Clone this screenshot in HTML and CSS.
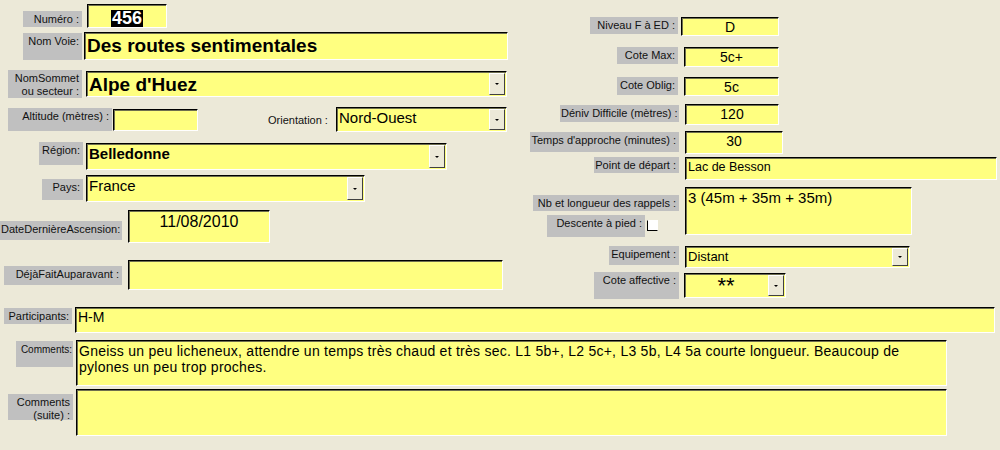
FILE: index.html
```html
<!DOCTYPE html>
<html lang="fr">
<head>
    <meta charset="UTF-8">
    <title>Fiche voie</title>
    <link rel="stylesheet" href="styles.css">
</head>
<body>
    <div class="form">
        <div class="top">
            <div class="col-left">
                <div class="row r-numero">
                    <span class="lbl">Numéro :</span>
                    <div class="fld c"><span class="sel">456</span></div>
                </div>
                <div class="row r-voie">
                    <span class="lbl">Nom Voie:</span>
                    <div class="fld big">Des routes sentimentales</div>
                </div>
                <div class="row r-sommet">
                    <span class="lbl">NomSommet<br>ou secteur :</span>
                    <div class="fld big combo">Alpe d'Huez<span class="drop"></span></div>
                </div>
                <div class="row r-alt">
                    <span class="lbl">Altitude (mètres) :</span>
                    <div class="fld f-alt"></div>
                    <span class="plain">Orientation :</span>
                    <div class="fld combo f-orient">Nord-Ouest<span class="drop"></span></div>
                </div>
                <div class="row r-region">
                    <span class="lbl">Région:</span>
                    <div class="fld combo bold">Belledonne<span class="drop"></span></div>
                </div>
                <div class="row r-pays">
                    <span class="lbl">Pays:</span>
                    <div class="fld combo">France<span class="drop"></span></div>
                </div>
                <div class="row r-date">
                    <span class="lbl">DateDernièreAscension:</span>
                    <div class="fld c">11/08/2010</div>
                </div>
                <div class="row r-deja">
                    <span class="lbl">DéjàFaitAuparavant :</span>
                    <div class="fld"></div>
                </div>
            </div>

            <div class="col-right">
                <div class="row r-niv">
                    <span class="lbl">Niveau F à ED :</span>
                    <div class="fld c">D</div>
                </div>
                <div class="row r-max">
                    <span class="lbl">Cote Max:</span>
                    <div class="fld c">5c+</div>
                </div>
                <div class="row r-obl">
                    <span class="lbl">Cote Oblig:</span>
                    <div class="fld c">5c</div>
                </div>
                <div class="row r-den">
                    <span class="lbl">Déniv Difficile (mètres) :</span>
                    <div class="fld c">120</div>
                </div>
                <div class="row r-tmp">
                    <span class="lbl">Temps d'approche (minutes) :</span>
                    <div class="fld c">30</div>
                </div>
                <div class="row r-pt">
                    <span class="lbl">Point de départ :</span>
                    <div class="fld">Lac de Besson</div>
                </div>
                <div class="row r-rap">
                    <div class="stack">
                        <span class="lbl l-rap">Nb et longueur des rappels :</span>
                        <div class="check-row">
                            <span class="lbl l-desc">Descente à pied :</span>
                            <span class="chk"></span>
                        </div>
                    </div>
                    <div class="fld">3 (45m + 35m + 35m)</div>
                </div>
                <div class="row r-eq">
                    <span class="lbl">Equipement :</span>
                    <div class="fld combo">Distant<span class="drop"></span></div>
                </div>
                <div class="row r-aff">
                    <span class="lbl">Cote affective :</span>
                    <div class="fld combo c stars">**<span class="drop"></span></div>
                </div>
            </div>
        </div>

        <div class="bottom">
            <div class="row r-part">
                <span class="lbl">Participants:</span>
                <div class="fld">H-M</div>
            </div>
            <div class="row r-com">
                <span class="lbl">Comments:</span>
                <div class="fld memo">Gneiss un peu licheneux, attendre un temps très chaud et très sec. L1 5b+, L2 5c+, L3 5b, L4 5a courte longueur. Beaucoup de pylones un peu trop proches.</div>
            </div>
            <div class="row r-suite">
                <span class="lbl">Comments<br>(suite) :</span>
                <div class="fld memo"></div>
            </div>
        </div>
    </div>
</body>
</html>
```

FILE: styles.css
```css
* {
    box-sizing: border-box;
}
body {
    margin: 0;
    width: 1000px;
    height: 450px;
    overflow: hidden;
    background-color: #ece9d8;
    font-family: "Liberation Sans", Arial, sans-serif;
    color: #000;
}
.top {
    display: flex;
    align-items: flex-start;
}
.col-left {
    flex: none;
    width: 520px;
}
.col-right {
    flex: 1;
}
.row {
    display: flex;
    align-items: flex-start;
}

/* grey access-style labels */
.lbl {
    flex: none;
    background: #c0c0c0;
    font-size: 11px;
    line-height: 13px;
    text-align: right;
    padding: 2px 3px 0 1px;
    white-space: nowrap;
    color: #111;
}
.plain {
    flex: none;
    font-size: 11px;
    line-height: 13px;
    color: #111;
}

/* yellow sunken text boxes */
.fld {
    flex: none;
    position: relative;
    background: #ffff80;
    border: 1px solid;
    border-color: #000 #fff #fff #000;
    box-shadow: inset 1px 1px 0 #6f6f50;
    font-size: 14px;
    line-height: 17px;
    padding: 1px 2px 0;
    white-space: nowrap;
    overflow: hidden;
}
.fld.c {
    text-align: center;
}
.fld.big {
    font-size: 19px;
    font-weight: bold;
    line-height: 24px;
}
.fld.bold {
    font-size: 15px;
    font-weight: bold;
}
.fld.combo {
    padding-right: 20px;
}
.fld.memo {
    white-space: normal;
}
.drop {
    position: absolute;
    top: 1px;
    right: 1px;
    bottom: 1px;
    width: 16px;
    background: #ece9d8;
    border: 1px solid;
    border-color: #fff #404040 #404040 #fff;
    display: flex;
    align-items: center;
    justify-content: center;
}
.drop::after {
    content: '';
    border-left: 2px solid transparent;
    border-right: 2px solid transparent;
    border-top: 2px solid #000;
}
.sel {
    display: inline-block;
    vertical-align: top;
    background: #000;
    color: #fff;
    font-size: 18px;
    font-weight: bold;
    line-height: 17px;
    padding: 0 1px;
    margin-top: 4px;
}
.chk {
    flex: none;
    width: 11px;
    height: 11px;
    margin: 5px 0 0 2px;
    background: #fff;
    border: 1px solid;
    border-color: #fff #fff #000 #000;
}

/* left column */
.r-numero { margin-top: 4px; }
.r-numero .lbl { margin: 7px 0 0 23px; width: 59px; height: 16px; }
.r-numero .fld { margin-left: 5px; width: 80px; height: 24px; line-height: 21px; }

.r-voie { margin-top: 4px; }
.r-voie .lbl { margin: 1px 0 0 23px; width: 59px; height: 27px; }
.r-voie .fld { margin-left: 2px; width: 424px; height: 28px; }

.r-sommet { margin-top: 10px; }
.r-sommet .lbl { margin-left: 8px; width: 74px; height: 28px; }
.r-sommet .fld { margin: 1px 0 0 4px; width: 421px; height: 26px; }

.r-alt { margin-top: 9px; }
.r-alt .lbl { margin: 1px 0 0 8px; width: 104px; height: 23px; }
.f-alt { margin: 2px 0 0 1px; width: 85px; height: 22px; }
.r-alt .plain { margin: 7px 0 0 70px; width: 60px; }
.f-orient { margin-left: 8px; width: 171px; height: 25px; font-size: 15px; }

.r-region { margin-top: 10px; }
.r-region .lbl { margin-left: 39px; width: 44px; height: 23px; }
.r-region .fld { margin: 1px 0 0 3px; width: 361px; height: 27px; }

.r-pays { margin-top: 5px; }
.r-pays .lbl { margin: 4px 0 0 42px; width: 41px; height: 21px; }
.r-pays .fld { margin-left: 3px; width: 279px; height: 27px; font-size: 15px; }

.r-date { margin-top: 8px; }
.r-date .lbl { margin-top: 11px; width: 122px; height: 19px; }
.r-date .fld { margin-left: 6px; width: 142px; height: 33px; font-size: 16px; line-height: 19px; }

.r-deja { margin-top: 17px; }
.r-deja .lbl { margin: 6px 0 0 4px; width: 118px; height: 19px; }
.r-deja .fld { margin-left: 6px; width: 375px; height: 30px; }

/* right column */
.col-right .fld { font-size: 14px; }
.r-niv { margin-top: 17px; }
.r-niv .lbl { margin-left: 70px; width: 88px; height: 17px; }
.r-niv .fld { margin-left: 3px; width: 98px; height: 19px; }

.r-max { margin-top: 11px; }
.r-max .lbl { margin-left: 97px; width: 61px; height: 17px; }
.r-max .fld { margin-left: 6px; width: 95px; height: 20px; }

.r-obl { margin-top: 10px; }
.r-obl .lbl { margin-left: 97px; width: 61px; height: 18px; }
.r-obl .fld { margin-left: 6px; width: 95px; height: 19px; }

.r-den { margin-top: 8px; }
.r-den .lbl { margin: 1px 0 0 40px; width: 119px; height: 17px; }
.r-den .fld { margin-left: 6px; width: 94px; height: 21px; }

.r-tmp { margin-top: 6px; }
.r-tmp .lbl { margin: 1px 0 0 10px; width: 149px; height: 20px; }
.r-tmp .fld { margin-left: 6px; width: 98px; height: 23px; }

.r-pt { margin-top: 3px; }
.r-pt .lbl { margin-left: 74px; width: 85px; height: 16px; }
.r-pt .fld { margin-left: 6px; width: 312px; height: 23px; font-size: 12.5px; }

.r-rap { margin-top: 7px; }
.stack {
    flex: none;
    width: 159px;
    display: flex;
    flex-direction: column;
    align-items: flex-end;
}
.l-rap { margin-top: 8px; width: 146px; height: 16px; }
.check-row {
    display: flex;
    align-items: flex-start;
    margin: 4px 21px 0 0;
}
.l-desc { width: 98px; height: 22px; }
.r-rap .fld { margin-left: 6px; width: 227px; height: 48px; font-size: 15px; }

.r-eq { margin-top: 9px; }
.r-eq .lbl { margin-left: 89px; width: 70px; height: 19px; }
.r-eq .fld { margin-left: 6px; width: 225px; height: 22px; font-size: 13px; }

.r-aff { margin-top: 4px; }
.r-aff .lbl { margin-left: 74px; width: 85px; height: 27px; }
.r-aff .fld { margin: 1px 0 0 5px; width: 102px; height: 25px; }
.col-right .fld.stars { font-size: 22px; line-height: 23px; padding-top: 0; }

/* bottom rows */
.r-part { margin-top: 8px; }
.r-part .lbl { margin: 1px 0 0 4px; width: 68px; height: 16px; }
.r-part .fld { margin-left: 3px; width: 920px; height: 26px; }

.r-com { margin-top: 7px; }
.r-com .lbl { margin: 1px 0 0 16px; width: 57px; height: 26px; font-size: 10px; padding-right: 1px; }
.r-com .fld { margin-left: 3px; width: 871px; height: 46px; line-height: 16px; padding-top: 2px; letter-spacing: 0.25px; }

.r-suite { margin-top: 3px; }
.r-suite .lbl { margin: 5px 0 0 8px; width: 65px; height: 26px; }
.r-suite .fld { margin-left: 3px; width: 871px; height: 47px; }
```
